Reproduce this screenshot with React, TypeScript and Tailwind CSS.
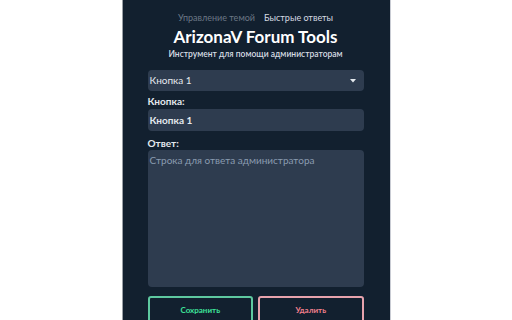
export default function App() {
  return (
    <div className="flex h-[320px] w-[512px] justify-center overflow-hidden bg-white" style={{ fontFamily: 'Lato, "Noto Sans", sans-serif' }}>
      <div className="flex w-[269px] flex-col border-l border-r border-l-[#9aa0a6] border-r-[#c9ccd4] bg-[#12202f]">
        <div className="h-[2px] w-full bg-[#2a2438]" />
        <div className="flex flex-col px-[25px] pr-[26px]">
          <div className="mt-[11px] flex justify-center gap-[9px] text-[9px] leading-[13px]">
            <span className="text-[#6b7785]">Управление темой</span>
            <span className="text-[#d5dbe2]">Быстрые ответы</span>
          </div>
          <h1 className="mt-[3px] text-center text-[17px] font-bold leading-[20px] text-white">ArizonaV Forum Tools</h1>
          <p className="mt-[1px] text-center text-[8.5px] font-semibold leading-[12px] text-[#d7dde3]">Инструмент для помощи администраторам</p>

          <div className="mt-[10px] flex h-[21px] items-center justify-between rounded-[4px] bg-[#2e3c4f] pl-[2px] pr-[8px] text-[10px] text-[#e4e9ee]">
            <span>Кнопка 1</span>
            <svg width="6" height="4" viewBox="0 0 6 4"><path d="M0 0h6L3 3.5z" fill="#e4e9ee" /></svg>
          </div>

          <label className="mt-[4px] text-[10px] font-bold leading-[12px] text-[#e4e9ee]">Кнопка:</label>
          <div className="mt-[2px] flex h-[22px] items-center rounded-[4px] bg-[#2e3c4f] pl-[2px] text-[10px] font-bold text-[#e4e9ee]">Кнопка 1</div>

          <label className="mt-[6px] text-[10px] font-bold leading-[12px] text-[#e4e9ee]">Ответ:</label>
          <div className="mt-[1px] h-[137px] rounded-[4px] bg-[#2e3c4f] pl-[2px] pt-[3px] text-[10px] leading-[14px] text-[#8a9bb0]">Строка для ответа администратора</div>

          <div className="mt-[9px] flex gap-[5px]">
            <button className="flex h-[28px] flex-1 items-center justify-center rounded-[3px] border-2 border-[#5ec9a0] bg-[#12202f] text-[8px] font-bold text-[#3ee39a]">Сохранить</button>
            <button className="flex h-[28px] flex-1 items-center justify-center rounded-[3px] border-2 border-[#e7a3ad] bg-[#12202f] text-[8px] font-bold text-[#f07f8c]">Удалить</button>
          </div>
        </div>
      </div>
    </div>
  );
}
